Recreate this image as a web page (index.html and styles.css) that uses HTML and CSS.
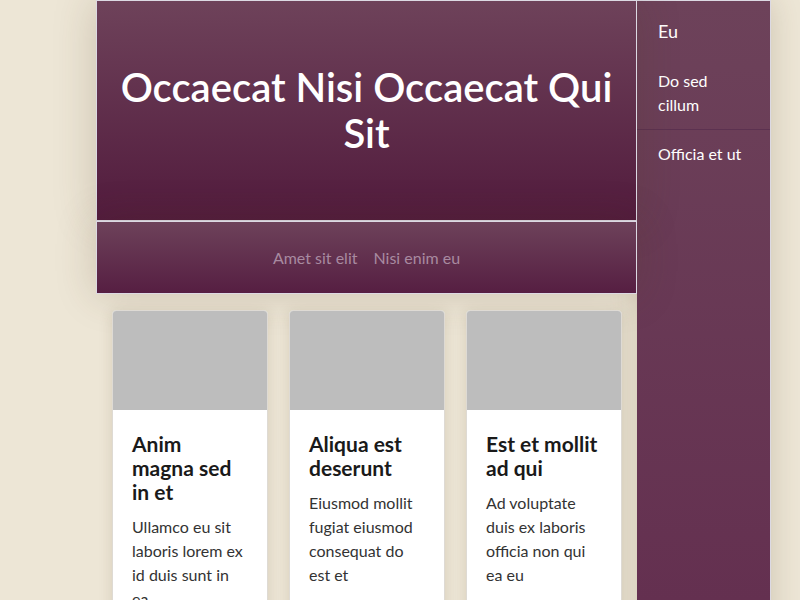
FILE: index.html
```html
<!DOCTYPE html>
<html lang="en">
<head>
<meta charset="utf-8">
<title>Occaecat</title>
<link rel="stylesheet" href="styles.css">
</head>
<body>
<div class="page">
  <div class="main">
    <header class="hero">
      <h1 class="hero-title">Occaecat Nisi Occaecat Qui Sit</h1>
    </header>
    <nav class="nav">
      <a class="nav-link" href="#">Amet sit elit</a>
      <a class="nav-link" href="#">Nisi enim eu</a>
    </nav>
    <section class="cards">
      <article class="card">
        <div class="card-img"></div>
        <div class="card-body">
          <h2 class="card-title">Anim magna sed in et</h2>
          <p class="card-text">Ullamco eu sit laboris lorem ex id duis sunt in ea</p>
        </div>
      </article>
      <article class="card">
        <div class="card-img"></div>
        <div class="card-body">
          <h2 class="card-title">Aliqua est deserunt</h2>
          <p class="card-text">Eiusmod mollit fugiat eiusmod consequat do est et</p>
        </div>
      </article>
      <article class="card">
        <div class="card-img"></div>
        <div class="card-body">
          <h2 class="card-title">Est et mollit ad qui</h2>
          <p class="card-text">Ad voluptate duis ex laboris officia non qui ea eu</p>
        </div>
      </article>
    </section>
  </div>
  <aside class="sidebar">
    <div class="side-title">Eu</div>
    <ul class="side-list">
      <li class="side-item">Do sed cillum</li>
      <li class="side-item">Officia et ut</li>
    </ul>
  </aside>
</div>
</body>
</html>
```

FILE: styles.css
```css
* { box-sizing: border-box; }
html, body { margin: 0; padding: 0; }
body {
  background: #ede6d6;
  font-family: Lato, "Open Sans", sans-serif;
  height: 600px;
  overflow: hidden;
}
.page {
  display: flex;
  align-items: stretch;
  padding-left: 96px;
  min-height: 800px;
}
.main {
  width: 541px;
  position: relative;
  z-index: 2;
}
.hero {
  background: linear-gradient(#6e425a, #521b3d);
  border: 1px solid #dcd9e3;
  padding: 63px 20px 64px;
  box-shadow: 0 0 40px rgba(80, 60, 30, 0.22);
}
.hero-title {
  margin: 0;
  color: #fff;
  font-size: 40px;
  line-height: 46px;
  font-weight: 600;
  text-align: center;
}
.nav {
  background: linear-gradient(#6d425a, #561e42);
  border: 1px solid #dcd9e3;
  height: 73px;
  display: flex;
  justify-content: center;
  align-items: center;
  gap: 16px;
  box-shadow: 0 0 40px rgba(80, 60, 30, 0.22);
}
.nav-link {
  color: #a88aa0;
  text-decoration: none;
  font-size: 16px;
}
.cards {
  display: grid;
  grid-template-columns: repeat(3, 156px);
  gap: 21px;
  padding: 16px 15px 16px 16px;
}
.card {
  background: #fff;
  border: 1px solid #dedad4;
  border-radius: 4px;
  overflow: hidden;
  box-shadow: 0 2px 14px rgba(80, 60, 30, 0.15);
}
.card-img {
  height: 99px;
  background: #bdbdbd;
}
.card-body {
  padding: 22px 19px 20px;
}
.card-title {
  margin: 0 0 11px;
  font-size: 21px;
  line-height: 24px;
  font-weight: 700;
  color: #1a1a1a;
}
.card-text {
  margin: 0;
  font-size: 16px;
  line-height: 24px;
  color: #333;
}
.sidebar {
  width: 134px;
  background: linear-gradient(#6d425a, #643050 600px);
  border-top: 1px solid #dcd9e3;
  border-right: 1px solid #dcd9e3;
  color: #fff;
  box-shadow: 0 0 30px rgba(80, 60, 30, 0.2);
  position: relative;
  z-index: 1;
}
.side-title {
  padding: 19px 20px 15px 21px;
  font-size: 18px;
  line-height: 22px;
}
.side-list {
  list-style: none;
  margin: 0;
  padding: 0;
}
.side-item {
  padding: 12px 26px 12px 21px;
  font-size: 16px;
  line-height: 24px;
}
.side-item + .side-item {
  border-top: 1px solid #5c3150;
}
```
